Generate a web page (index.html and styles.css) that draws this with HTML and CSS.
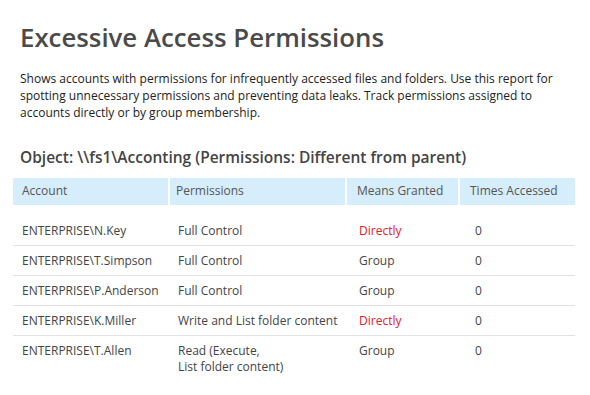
FILE: index.html
```html
<!DOCTYPE html>
<html lang="en">
<head>
    <meta charset="UTF-8">
    <title>Excessive Access Permissions</title>
    <link rel="stylesheet" href="styles.css">
</head>
<body>
    <div class="report">
        <h1>Excessive Access Permissions</h1>
        <p class="summary">Shows accounts with permissions for infrequently accessed files and folders. Use this report for<br>
            spotting unnecessary permissions and preventing data leaks. Track permissions assigned to<br>
            accounts directly or by group membership.</p>

        <h2>Object: \\fs1\Acconting (Permissions: Different from parent)</h2>

        <table class="perm-table">
            <colgroup>
                <col class="c-account">
                <col class="c-perm">
                <col class="c-means">
                <col class="c-times">
            </colgroup>
            <thead>
                <tr>
                    <th>Account</th>
                    <th>Permissions</th>
                    <th>Means Granted</th>
                    <th>Times Accessed</th>
                </tr>
            </thead>
            <tbody>
                <tr>
                    <td>ENTERPRISE\N.Key</td>
                    <td>Full Control</td>
                    <td class="direct">Directly</td>
                    <td>0</td>
                </tr>
                <tr>
                    <td>ENTERPRISE\T.Simpson</td>
                    <td>Full Control</td>
                    <td>Group</td>
                    <td>0</td>
                </tr>
                <tr>
                    <td>ENTERPRISE\P.Anderson</td>
                    <td>Full Control</td>
                    <td>Group</td>
                    <td>0</td>
                </tr>
                <tr>
                    <td>ENTERPRISE\K.Miller</td>
                    <td>Write and List folder content</td>
                    <td class="direct">Directly</td>
                    <td>0</td>
                </tr>
                <tr>
                    <td>ENTERPRISE\T.Allen</td>
                    <td>Read (Execute,<br>List folder content)</td>
                    <td>Group</td>
                    <td>0</td>
                </tr>
            </tbody>
        </table>
    </div>
</body>
</html>
```

FILE: styles.css
```css
body {
    margin: 0;
    background: #fff;
    font-family: "Open Sans", Arial, sans-serif;
    color: #333;
}
.report {
    padding: 20px 15px 0 13px;
}
h1 {
    margin: 0 0 0 7px;
    font-size: 25.8px;
    font-weight: 600;
    line-height: 34px;
    color: #4a4a4a;
}
.summary {
    margin: 16px 0 0 7px;
    font-size: 12px;
    line-height: 17px;
    color: #222;
}
h2 {
    margin: 26px 0 0 7px;
    font-size: 15.5px;
    font-weight: 600;
    line-height: 20px;
    color: #444;
}
.perm-table {
    margin-top: 11px;
    width: 562px;
    table-layout: fixed;
    border-collapse: separate;
    border-spacing: 0;
    font-size: 12px;
    line-height: 16px;
    color: #444;
}
.c-account { width: 155px; }
.c-perm { width: 177px; }
.c-means { width: 113px; }
.c-times { width: 117px; }
.perm-table th {
    background: #d6edfb;
    font-weight: 400;
    text-align: left;
    padding: 5px 0 6px 10px;
    border-left: 2px solid #fff;
    color: #555;
}
.perm-table th:first-child {
    border-left: none;
    padding-left: 9px;
}
.perm-table th:nth-child(2) { padding-left: 6px; }
.perm-table td {
    padding: 7px 0 6px 0;
    border-bottom: 1px solid #e2e2e2;
    vertical-align: top;
}
.perm-table td:nth-child(1) { padding-left: 9px; }
.perm-table td:nth-child(2) { padding-left: 10px; }
.perm-table td:nth-child(3) { padding-left: 14px; }
.perm-table td:nth-child(4) { padding-left: 17px; }
.perm-table tbody tr:first-child td { padding-top: 18px; }
.perm-table tbody tr:last-child td { border-bottom: none; }
.direct { color: #e0202e; }
```
